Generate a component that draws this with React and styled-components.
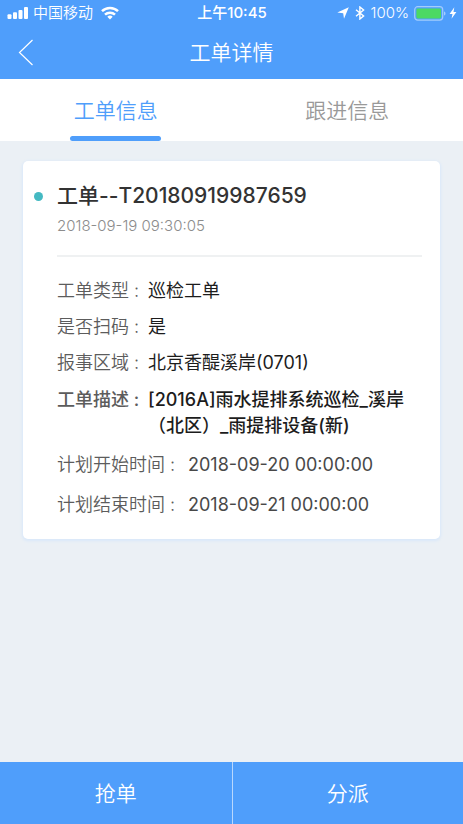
import React from "react";
import styled, { createGlobalStyle } from "styled-components";

const GlobalStyle = createGlobalStyle`
  *, *::before, *::after { box-sizing: border-box; }
  body {
    margin: 0;
    background: #ebf0f5;
    font-family: Inter, "Noto Sans CJK SC", sans-serif;
  }
  button {
    margin: 0;
    padding: 0;
    border: 0;
    background: none;
    font: inherit;
    color: inherit;
    cursor: pointer;
  }
`;

const Page = styled.div`
  min-height: 100vh;
  display: flex;
  flex-direction: column;
`;

const Top = styled.header`
  background: #4f9efb;
  color: #fff;
`;

const StatusBar = styled.div`
  display: grid;
  grid-template-columns: 1fr auto 1fr;
  align-items: center;
  height: 26px;
  padding: 0 6px 0 7px;
  font-size: 15px;
  line-height: 26px;
  font-weight: 350;
`;

const StatusGroup = styled.div`
  display: flex;
  align-items: center;
  justify-content: ${(p) => (p.$end ? "flex-end" : "flex-start")};
  gap: 5px;
`;

const Carrier = styled.span`
  margin-right: 3px;
`;

const Clock = styled.time`
  font-weight: 500;
`;

const Battery = styled.span`
  display: flex;
  align-items: center;
  gap: 3px;
`;

const NavBar = styled.div`
  display: grid;
  grid-template-columns: 52px 1fr 52px;
  align-items: center;
  height: 53px;
`;

const BackButton = styled.button`
  display: flex;
  align-items: center;
  justify-content: center;
  height: 100%;
`;

const PageTitle = styled.h1`
  margin: 0;
  text-align: center;
  font-size: 21px;
  line-height: 30px;
  font-weight: 350;
`;

const Tabs = styled.div`
  display: grid;
  grid-template-columns: 1fr 1fr;
  height: 62px;
  background: #fff;
`;

const Tab = styled.button.attrs({ role: "tab", type: "button" })`
  display: flex;
  flex-direction: column;
  align-items: center;
  justify-content: space-between;
  padding-top: 17px;
  font-size: 21px;
  line-height: 30px;
  font-weight: 350;
  color: ${(p) => (p.$active ? "#4f9efb" : "#999")};

  &::after {
    content: "";
    width: 91px;
    height: 5px;
    border-radius: 3px;
    background: ${(p) => (p.$active ? "#4f9efb" : "transparent")};
  }
`;

const Main = styled.main`
  flex: 1;
  padding: 20px 23px;
`;

const Card = styled.article`
  padding: 21px 18px 20px 34px;
  border-radius: 5px;
  background: #fff;
  box-shadow: 0 1px 3px 1px #d9e8fa;
`;

const CardHead = styled.div`
  padding-bottom: 19px;
  border-bottom: 2px solid #eff1f2;
`;

const OrderTitle = styled.h2`
  display: flex;
  align-items: center;
  gap: 14px;
  margin: 0 0 6px -23px;
  font-size: 21px;
  line-height: 28px;
  font-weight: 500;
  color: #333;

  &::before {
    content: "";
    width: 9px;
    height: 9px;
    border-radius: 50%;
    background: #44b9c2;
  }
`;

const Created = styled.time`
  display: block;
  font-size: 15px;
  line-height: 20px;
  font-weight: 350;
  color: #8c8c8c;
`;

const Details = styled.dl`
  display: flex;
  flex-direction: column;
  gap: 10px;
  margin: 21px 0 0;
`;

const Detail = styled.div`
  display: grid;
  grid-template-columns: ${(p) => (p.$wide ? "131px" : "91px")} 1fr;
  padding: ${(p) => (p.$wide ? "3px 0 1px" : p.$strong ? "1px 0 0" : "0")};
  font-size: 18px;
  line-height: 26px;
`;

const Label = styled.dt`
  font-weight: ${(p) => (p.$strong ? 500 : 350)};
  color: #5c5c5c;
  white-space: nowrap;
`;

const Value = styled.dd`
  margin: 0;
  font-weight: ${(p) => (p.$strong ? 500 : 400)};
  color: ${(p) => (p.$muted ? "#484848" : "#1c1c1c")};
`;

const Actions = styled.footer`
  display: grid;
  grid-template-columns: 1fr 1fr;
  height: 62px;
  background: #4f9efb;
`;

const Action = styled.button`
  padding-top: 2px;
  font-size: 21px;
  line-height: 30px;
  font-weight: 350;
  color: #fff;

  & + & {
    border-left: 1px solid #b9d8fd;
  }
`;

const SignalIcon = () => (
  <svg width="21" height="14" viewBox="0 0 21 14" fill="#fff" aria-hidden="true">
    <rect x="0.5" y="8.2" width="4" height="4.800" rx="1" />
    <rect x="6" y="6.2" width="4" height="6.800" rx="1" />
    <rect x="11.5" y="4" width="4" height="9" rx="1" />
    <rect x="17" y="1" width="4" height="12" rx="1" />
  </svg>
);

const WifiIcon = () => (
  <svg width="18" height="14" viewBox="0 0 18 14" fill="none" stroke="#fff" strokeWidth="2.5" aria-hidden="true">
    <path d="M1 5.2a11.4 11.4 0 0 1 16 0" />
    <path d="M4 8.7a7.2 7.2 0 0 1 10 0" />
    <path d="M9 13.4 6.3 10.8a3.9 3.9 0 0 1 5.4 0Z" fill="#fff" stroke="none" />
  </svg>
);

const LocationIcon = () => (
  <svg width="12" height="12" viewBox="0 0 12 12" fill="#fff" aria-hidden="true">
    <path d="M11.8.3 7 11.800 6.2 6.300 .3 5.5Z" />
  </svg>
);

const BluetoothIcon = () => (
  <svg width="12" height="14" viewBox="-1 0 12 14" fill="none" stroke="#fff" strokeWidth="1.4" aria-hidden="true">
    <path d="M1 3.8 8.6 10 4.9 13V1l3.7 3L1 10.2" />
  </svg>
);

const BatteryIcon = () => (
  <svg width="32" height="15" viewBox="0 0 32 15" fill="none" aria-hidden="true">
    <rect x="0.7" y="0.7" width="28" height="13.4" rx="3" stroke="#a3cdfd" strokeWidth="1.2" />
    <rect x="2.4" y="2.4" width="24.6" height="10" rx="1.4" fill="#4cd964" />
    <path d="M30 5.4c2 .5 2 3.500 0 4z" fill="#a3cdfd" />
  </svg>
);

const BoltIcon = () => (
  <svg width="8" height="12" viewBox="0 0 8 12" fill="#fff" aria-hidden="true">
    <path d="M5.300 0.300 0.600 6.900H3.500L2.500 11.700 7.400 4.900H4.500Z" />
  </svg>
);

const BackIcon = () => (
  <svg width="16" height="28" viewBox="0 0 16 28" fill="none" stroke="#fff" strokeWidth="1.2" aria-hidden="true">
    <path d="M14.500 1 1.500 13.500l13 12.500" />
  </svg>
);

const details = [
  { label: "工单类型", value: "巡检工单" },
  { label: "是否扫码", value: "是" },
  { label: "报事区域", value: "北京香醍溪岸(0701)" },
  { label: "工单描述", value: "[2016A]雨水提排系统巡检_溪岸（北区）_雨提排设备(新)", strong: true },
  { label: "计划开始时间", value: "2018-09-20 00:00:00", wide: true },
  { label: "计划结束时间", value: "2018-09-21 00:00:00", wide: true },
];

export default function App() {
  return (
    <Page>
      <GlobalStyle />
      <Top>
        <StatusBar>
          <StatusGroup>
            <SignalIcon />
            <Carrier>中国移动</Carrier>
            <WifiIcon />
          </StatusGroup>
          <Clock>上午10:45</Clock>
          <StatusGroup $end>
            <LocationIcon />
            <BluetoothIcon />
            <span>100%</span>
            <Battery>
              <BatteryIcon />
              <BoltIcon />
            </Battery>
          </StatusGroup>
        </StatusBar>
        <NavBar>
          <BackButton type="button" aria-label="返回">
            <BackIcon />
          </BackButton>
          <PageTitle>工单详情</PageTitle>
        </NavBar>
      </Top>
      <Tabs role="tablist">
        <Tab $active aria-selected="true">工单信息</Tab>
        <Tab aria-selected="false">跟进信息</Tab>
      </Tabs>
      <Main>
        <Card>
          <CardHead>
            <OrderTitle>工单--T20180919987659</OrderTitle>
            <Created>2018-09-19 09:30:05</Created>
          </CardHead>
          <Details>
            {details.map((d) => (
              <Detail key={d.label} $wide={d.wide} $strong={d.strong}>
                <Label $strong={d.strong}>{d.label} :</Label>
                <Value $muted={d.wide} $strong={d.strong}>{d.value}</Value>
              </Detail>
            ))}
          </Details>
        </Card>
      </Main>
      <Actions>
        <Action type="button">抢单</Action>
        <Action type="button">分派</Action>
      </Actions>
    </Page>
  );
}
